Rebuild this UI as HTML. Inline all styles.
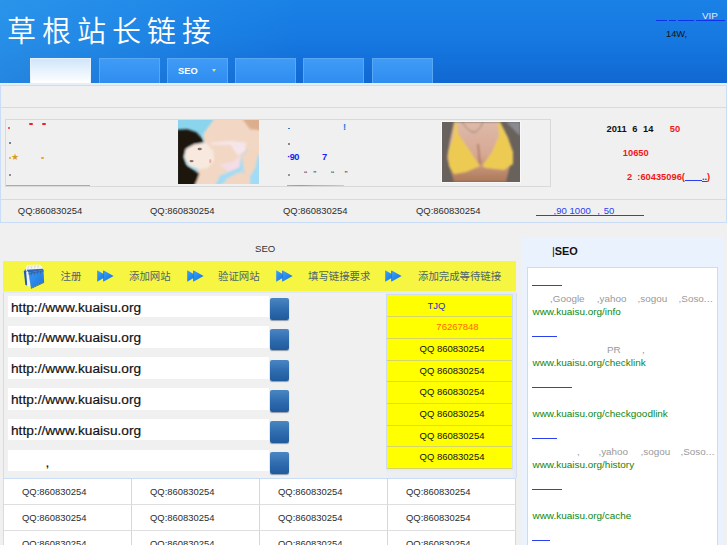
<!DOCTYPE html>
<html lang="zh-CN">
<head>
<meta charset="utf-8">
<title>草根站长链接</title>
<style>
html,body{margin:0;padding:0;}
body{width:727px;height:545px;overflow:hidden;position:relative;background:#f0f0f0;
 font-family:"Liberation Sans","Noto Sans CJK SC",sans-serif;font-size:9.3px;color:#222;}
.abs{position:absolute;}
a{color:#1a3cf0;text-decoration:underline;}
#hdr{left:0;top:0;width:727px;height:83px;
 background:linear-gradient(180deg,#1a81e6 0%,#1679e1 45%,#136ed8 80%,#1168d2 100%);}
#hdrglow{left:0;top:0;width:300px;height:83px;background:linear-gradient(90deg,rgba(60,170,240,.45),rgba(60,170,240,0));}
#logo{left:7px;top:12.4px;font-family:"Liberation Sans","Noto Sans CJK SC",sans-serif;font-weight:350;font-size:29px;letter-spacing:6px;color:#fff;line-height:40px;white-space:nowrap;}
.tab{top:57.5px;width:61px;height:25.5px;background:linear-gradient(180deg,#3f9bf6,#2f8df0);border:1px solid #58a8f6;border-bottom:none;box-sizing:border-box;}
.tab.on{background:linear-gradient(180deg,#cfe6fb 0%,#e8f3fd 50%,#ffffff 100%);border-color:#e6f1fc;}
.t{white-space:nowrap;line-height:12px;}
#strip{left:0px;top:85px;width:725px;height:21px;border:1px solid #c9dcf8;background:#f0f0f0;}
#adwrap{left:0px;top:108px;width:725px;height:114px;border:1px solid #c9dcf8;border-top:none;background:#f0f0f0;}
.adbox{top:119px;height:66px;border:1px solid #d9d9d9;background:#f0f0f0;}
.qq{font-size:9.45px;color:#2c2c2c;}
#ybar{left:3px;top:261px;width:513px;height:30px;background:#f5f542;}
.ytx{top:271px;font-size:10.4px;color:#4d666c;font-family:"Liberation Sans","Noto Sans CJK SC",sans-serif;line-height:12px;white-space:nowrap;}
.inp{left:8px;width:261px;height:21.7px;background:#fff;}
.url{left:11px;font-size:13.7px;color:#111;line-height:23px;-webkit-text-stroke:0.2px #111;white-space:nowrap;}
.btn{left:270.3px;width:18.4px;height:21.5px;border-radius:2px;box-shadow:0 1px 1px rgba(20,50,90,.45);background:linear-gradient(180deg,#4a86c2 0%,#2f6db0 50%,#1f5a9c 100%);}
.yrow{left:387px;width:125px;height:21px;background:#ffff00;border-bottom:1px solid #d6d466;text-align:center;line-height:19.4px;font-size:9.5px;color:#111;box-sizing:border-box;}
.cell{height:26px;background:#fff;border-right:1px solid #d8d8d8;border-bottom:1px solid #dedede;box-sizing:border-box;}
.sb-u{height:1px;background:#2a40f0;left:532px;}
.sb-g{left:532.5px;font-size:9.95px;color:#0e860e;white-space:nowrap;line-height:12px;}
.sb-d{font-size:9.9px;color:#999;white-space:nowrap;line-height:12px;}
</style>
</head>
<body>
<!-- header -->
<div id="hdr" class="abs"></div>
<div id="hdrglow" class="abs"></div>
<div id="logo" class="abs">草根站长链接</div>
<div class="abs tab on" style="left:30px"></div>
<div class="abs tab" style="left:99px"></div>
<div class="abs tab" style="left:167.2px"></div>
<div class="abs tab" style="left:235.3px"></div>
<div class="abs tab" style="left:303.3px"></div>
<div class="abs tab" style="left:371.8px"></div>
<div class="abs t" style="left:178px;top:65px;font-size:9.3px;font-weight:bold;color:#fff;">SEO</div>
<div class="abs" style="left:212px;top:69px;width:0;height:0;border-left:2.6px solid transparent;border-right:2.6px solid transparent;border-top:3.2px solid #e8e07a;"></div>
<div class="abs t" style="left:702px;top:10px;font-size:9.9px;color:#dfeeff;">VIP</div>
<div class="abs" style="left:656px;top:20px;width:11px;height:1px;background:#1030f0"></div>
<div class="abs" style="left:669px;top:20px;width:7px;height:1px;background:#1030f0"></div>
<div class="abs" style="left:678px;top:20px;width:16px;height:1px;background:#1030f0"></div>
<div class="abs" style="left:696px;top:20px;width:29px;height:1px;background:#1030f0"></div>
<div class="abs t" style="left:666px;top:27.5px;font-size:9.3px;color:#111;">14W,</div>

<!-- strip + ad wrapper -->
<div class="abs" style="left:0;top:83px;width:727px;height:2px;background:#e6eefa"></div>
<div id="strip" class="abs"></div>
<div id="adwrap" class="abs"></div>
<div class="abs" style="left:0px;top:199px;width:727px;height:1px;background:#c9dcf8"></div>

<div class="abs adbox" style="left:5px;width:544px;"></div>


<!-- ad box 1 content -->
<div class="abs" style="left:8px;top:127px;width:2px;height:2px;background:#f03020;border-radius:1px"></div>
<div class="abs" style="left:29px;top:123px;width:4px;height:2px;background:#f02020;border-radius:1px"></div>
<div class="abs" style="left:42px;top:123px;width:4px;height:2px;background:#f02020;border-radius:1px"></div>
<div class="abs" style="left:9px;top:142px;width:2px;height:2px;background:#505a80;border-radius:1px"></div>
<div class="abs" style="left:9px;top:157px;width:2px;height:2px;background:#d8a030;border-radius:1px"></div>
<div class="abs t" style="left:11px;top:151px;font-size:9px;color:#d89a20;font-family:'DejaVu Sans','Liberation Sans',sans-serif;">★</div>
<div class="abs" style="left:41px;top:157px;width:3px;height:2px;background:#e0a838;border-radius:1px"></div>
<div class="abs" style="left:9px;top:174px;width:2px;height:2px;background:#606a88;border-radius:1px"></div>
<div class="abs" style="left:6px;top:185px;width:84px;height:1px;background:#aaa"></div>

<!-- image 1 -->
<svg class="abs" style="left:178px;top:120px" width="81" height="64" viewBox="0 0 81 64">
 <defs><filter id="b1" x="-10%" y="-10%" width="120%" height="120%"><feGaussianBlur stdDeviation="7"/></filter>
 <filter id="b1s" x="-10%" y="-10%" width="120%" height="120%"><feGaussianBlur stdDeviation="4"/></filter>
 <clipPath id="c1"><rect width="81" height="64"/></clipPath></defs>
 <g clip-path="url(#c1)">
 <rect width="81" height="64" fill="#8ad4ee"/>
 <g transform="scale(0.1357) translate(-30,-32)">
 <g filter="url(#b1)">
  <path d="M300 520 L420 380 L640 230 L640 520 Z" fill="#a6dcf6"/>
  <path d="M215 135 L300 20 L640 20 L640 300 L600 420 L560 520 L150 520 L170 420 L230 240 Z" fill="#f2d8c4"/>
  <path d="M500 20 L640 20 L640 110 L560 100 Z" fill="#dcae8e"/>
  <path d="M560 250 L640 300 L640 520 L560 520 L560 440 L500 420 Z" fill="#a2dbf5"/>
  <path d="M500 290 L545 245 L560 300 L520 380 L470 440 L400 470 L330 520 L300 520 L340 440 L420 410 L480 380 Z" fill="#a2dbf5"/>
  <path d="M500 300 L560 240 L628 250 L600 380 L560 450 L520 430 Z" fill="#f2d6c0"/>
  <path d="M380 470 L470 420 L560 450 L560 520 L420 520 Z" fill="#f2d6c2"/>
  <path d="M20 104 L100 100 L165 122 L208 168 L220 198 L150 212 L95 238 L72 300 L90 362 L150 404 L188 424 L172 470 L150 520 L20 520 Z" fill="#1b1411"/>
  <path d="M85 250 L150 210 L235 200 L290 260 L295 330 L250 385 L180 395 L110 370 L78 310 Z" fill="#f8e9df"/>
  <path d="M270 200 L420 186 L530 200 L522 262 L470 292 L440 250 L420 215 L280 215 Z" fill="#f6e6ec"/>
  <path d="M330 362 L440 340 L492 288 L482 382 L400 412 L368 384 Z" fill="#f4dde6"/>
 </g>
 <g filter="url(#b1s)">
  <ellipse cx="190" cy="245" rx="16" ry="9" fill="#6a5248" opacity=".8"/>
  <ellipse cx="130" cy="335" rx="15" ry="9" fill="#6a5248" opacity=".8"/>
  <ellipse cx="268" cy="335" rx="8" ry="16" fill="#e8a098" opacity=".8"/>
 </g>
 </g></g>
</svg>

<!-- ad box 2 text -->
<div class="abs" style="left:288px;top:128px;width:2px;height:1px;background:#3a78d0"></div>
<div class="abs t" style="left:343px;top:121px;font-size:9.3px;font-weight:bold;color:#1e78e0;">!</div>
<div class="abs" style="left:288px;top:143px;width:1.6px;height:1.6px;background:#666;border-radius:1px"></div>
<div class="abs t" style="left:287.3px;top:151px;font-size:9.2px;font-weight:bold;color:#1a22f0;letter-spacing:-.6px">·90</div>
<div class="abs t" style="left:322px;top:151px;font-size:9.3px;font-weight:bold;color:#1a22f0;">7</div>
<div class="abs" style="left:288px;top:174px;width:1.6px;height:1.6px;background:#777;border-radius:1px"></div>
<div class="abs t" style="left:304px;top:167.5px;font-size:9.3px;color:#555;">“</div>
<div class="abs t" style="left:313.3px;top:167.5px;font-size:9.3px;color:#555;">”</div>
<div class="abs t" style="left:331px;top:167.5px;font-size:9.3px;color:#555;">“</div>
<div class="abs t" style="left:344.5px;top:167.5px;font-size:9.3px;color:#555;">”</div>
<div class="abs" style="left:287px;top:185px;width:57px;height:1px;opacity:.75;background:linear-gradient(90deg,#d08850,#8a7a80 25%,#d09060 50%,#c8a088 75%,#c0c0c0)"></div>

<!-- image 2 -->
<div class="abs" style="left:441px;top:121px;width:80px;height:62px;background:#f8f8f8"></div>
<svg class="abs" style="left:442px;top:122px" width="78" height="60" viewBox="0 0 78 60">
 <defs><filter id="b2" x="-10%" y="-10%" width="120%" height="120%"><feGaussianBlur stdDeviation="1.1"/></filter>
 <clipPath id="c2"><rect width="78" height="60"/></clipPath>
 <linearGradient id="sk" x1="0" y1="0" x2="0" y2="1"><stop offset="0" stop-color="#dfbaa8"/><stop offset=".55" stop-color="#d6a893"/><stop offset="1" stop-color="#ac7858"/></linearGradient></defs>
 <g clip-path="url(#c2)">
 <rect width="78" height="60" fill="#68615c"/>
 <g filter="url(#b2)">
  <path d="M64 0 L78 0 L78 14 Z" fill="#8a8a90"/>
  <path d="M12 0 L58 0 L66 16 L70 34 L64 60 L12 60 L5 36 L8 18 Z" fill="url(#sk)"/>
  <path d="M13 0 L15 0 L16 12 L26 26 L38 44 L24 50 L12 52 L7 44 L6 30 L11 16 Z" fill="#edcb52"/>
  <path d="M56 0 L58 0 L66 16 L71 30 L71 42 L62 48 L44 46 L40 44 L50 30 L57 14 Z" fill="#edcb52"/>
  <path d="M20 0 Q28 12 34 10 Q39 6 41 0" fill="none" stroke="#8a7f7a" stroke-width="1"/>
  <path d="M36 22 L38 42" stroke="#a8705a" stroke-width="1.5" fill="none"/>
 </g></g>
</svg>

<!-- right info -->
<div class="abs t" style="left:606.5px;top:122.6px;font-size:9.3px;font-weight:bold;color:#111;word-spacing:3px;">2011 6 14</div>
<div class="abs t" style="left:669.8px;top:122.6px;font-size:9.3px;font-weight:bold;color:#f01818;">50</div>
<div class="abs t" style="left:622.8px;top:146.6px;font-size:9.3px;font-weight:bold;color:#f01818;">10650</div>
<div class="abs t" style="left:627px;top:171px;font-size:9.3px;font-weight:bold;color:#f01818;">2&nbsp; :60435096(<span style="display:inline-block;width:17px;border-bottom:1px solid #2a40f0;height:9px;vertical-align:top"></span><span style="color:#2a40f0;text-decoration:underline">..</span>)</div>
<div class="abs t" style="left:536px;top:205px;font-size:9.3px;color:#2a40f0;width:108px;border-bottom:1px solid #2a40f0;height:11px;line-height:12px;box-sizing:border-box;"><span style="margin-left:17.6px;font-size:9.55px">,90 1000<span style="display:inline-block;width:6.6px"></span>,<span style="display:inline-block;width:3.8px"></span>50</span></div>

<!-- QQ row -->
<div class="abs t qq" style="left:17.8px;top:205px;">QQ:860830254</div>
<div class="abs t qq" style="left:150px;top:205px;">QQ:860830254</div>
<div class="abs t qq" style="left:283px;top:205px;">QQ:860830254</div>
<div class="abs t qq" style="left:416px;top:205px;">QQ:860830254</div>


<!-- main left panel -->
<div class="abs" style="left:3px;top:291px;width:513px;height:187px;background:#f0f0f0;border-left:1px solid #c9dcf8;box-sizing:border-box;"></div>
<div class="abs t" style="left:255px;top:243px;font-size:9.6px;color:#333;">SEO</div>
<div id="ybar" class="abs"></div>
<div class="abs" style="left:3px;top:291px;width:513px;height:1.5px;background:#e2eaf8"></div>
<!-- notebook icon -->
<svg class="abs" style="left:23px;top:264px" width="22" height="25" viewBox="0 0 22 25">
 <defs><linearGradient id="nb" x1="0" y1="0" x2="1" y2="1"><stop offset="0" stop-color="#3a98f4"/><stop offset="1" stop-color="#1b74de"/></linearGradient></defs>
 <g transform="scale(0.06878) translate(-116,-87)">
  <path d="M128 195 L160 148 L182 160 L180 402 L150 388 Z" fill="#1f5cb0"/>
  <path d="M162 200 L205 188 L222 425 L178 402 Z" fill="#f1f1f6"/>
  <path d="M150 152 L178 102 L362 94 L402 136 L402 158 L180 170 L160 200 Z" fill="#f3f3f3"/>
  <path d="M172 172 L402 156 L414 176 L198 216 Z" fill="#2c66b8"/>
  <path d="M196 214 L414 174 L423 350 L232 438 Z" fill="url(#nb)"/>
  <path d="M196 214 L414 174 L415 196 L198 238 Z" fill="#2a70c8"/>
  <path d="M240 215 l-6 34 M285 206 l-6 34 M330 198 l-6 34 M375 190 l-6 34" stroke="#4a5a70" stroke-width="11" stroke-linecap="round"/>
  <path d="M205 112 l-20 44 M250 108 l-18 46 M295 104 l-14 48 M340 100 l-8 50" stroke="#c9c9cf" stroke-width="10"/>
  <path d="M232 438 L423 350 L423 360 L236 446 Z" fill="#35506e"/>
 </g>
</svg>

<div class="abs ytx" style="left:60.5px;">注册</div>
<svg class="abs" style="left:97px;top:270px" width="17" height="12" viewBox="0 0 17 12"><defs><linearGradient id="ag" x1="0" y1="0" x2="1" y2="1"><stop offset="0" stop-color="#3ea2fa"/><stop offset="1" stop-color="#0e6ee0"/></linearGradient></defs><path d="M0.2 0.2 L10 6 L0.2 11.8 Z" fill="url(#ag)"/><path d="M6.3 0.2 L16.6 6 L6.3 11.8 Z" fill="url(#ag)"/><path d="M6.5 1 L6.5 11" stroke="#1862c8" stroke-width=".7" opacity=".7"/></svg>
<div class="abs ytx" style="left:129px;">添加网站</div>
<svg class="abs" style="left:187px;top:270px" width="17" height="12" viewBox="0 0 17 12"><path d="M0.2 0.2 L10 6 L0.2 11.8 Z" fill="url(#ag)"/><path d="M6.3 0.2 L16.6 6 L6.3 11.8 Z" fill="url(#ag)"/><path d="M6.5 1 L6.5 11" stroke="#1862c8" stroke-width=".7" opacity=".7"/></svg>
<div class="abs ytx" style="left:218px;">验证网站</div>
<svg class="abs" style="left:276px;top:270px" width="17" height="12" viewBox="0 0 17 12"><path d="M0.2 0.2 L10 6 L0.2 11.8 Z" fill="url(#ag)"/><path d="M6.3 0.2 L16.6 6 L6.3 11.8 Z" fill="url(#ag)"/><path d="M6.5 1 L6.5 11" stroke="#1862c8" stroke-width=".7" opacity=".7"/></svg>
<div class="abs ytx" style="left:308px;">填写链接要求</div>
<svg class="abs" style="left:385px;top:270px" width="17" height="12" viewBox="0 0 17 12"><path d="M0.2 0.2 L10 6 L0.2 11.8 Z" fill="url(#ag)"/><path d="M6.3 0.2 L16.6 6 L6.3 11.8 Z" fill="url(#ag)"/><path d="M6.5 1 L6.5 11" stroke="#1862c8" stroke-width=".7" opacity=".7"/></svg>
<div class="abs ytx" style="left:418px;">添加完成等待链接</div>
<div class="abs inp" style="top:295.5px"></div>
<div class="abs url" style="top:295.5px">http://www.kuaisu.org</div>
<div class="abs btn" style="top:298.0px"></div>
<div class="abs inp" style="top:326.3px"></div>
<div class="abs url" style="top:326.3px">http://www.kuaisu.org</div>
<div class="abs btn" style="top:328.8px"></div>
<div class="abs inp" style="top:357.1px"></div>
<div class="abs url" style="top:357.1px">http://www.kuaisu.org</div>
<div class="abs btn" style="top:359.6px"></div>
<div class="abs inp" style="top:387.9px"></div>
<div class="abs url" style="top:387.9px">http://www.kuaisu.org</div>
<div class="abs btn" style="top:390.4px"></div>
<div class="abs inp" style="top:418.7px"></div>
<div class="abs url" style="top:418.7px">http://www.kuaisu.org</div>
<div class="abs btn" style="top:421.2px"></div>
<div class="abs inp" style="top:449.5px"></div>
<div class="abs url" style="top:449.0px;left:45.5px;margin-top:1.5px">,</div>
<div class="abs btn" style="top:452.0px"></div>
<div class="abs" style="left:385.5px;top:293px;width:131px;height:185px;background:#e6ebf3;border-right:1px solid #d5e0f4;box-sizing:border-box"></div>
<div class="abs" style="left:385.5px;top:471px;width:127.5px;height:7px;background:#eceef2"></div>
<div class="abs" style="left:386px;top:294px;width:127px;height:175px;background:#dfe8d0;border:1px solid #cfdcf0;box-sizing:border-box"></div>
<div class="abs yrow" style="top:295.5px;height:21.7px"><span style="color:#2a2ed0;margin-right:26px">TJQ</span></div>
<div class="abs yrow" style="top:317.2px;height:21.7px"><span style="color:#ff6a00;margin-left:16px">76267848</span></div>
<div class="abs yrow" style="top:338.9px;height:21.7px"><span style="margin-left:5px">QQ 860830254</span></div>
<div class="abs yrow" style="top:360.6px;height:21.7px"><span style="margin-left:5px">QQ 860830254</span></div>
<div class="abs yrow" style="top:382.3px;height:21.7px"><span style="margin-left:5px">QQ 860830254</span></div>
<div class="abs yrow" style="top:404.0px;height:21.7px"><span style="margin-left:5px">QQ 860830254</span></div>
<div class="abs yrow" style="top:425.7px;height:21.7px"><span style="margin-left:5px">QQ 860830254</span></div>
<div class="abs yrow" style="top:447.4px;height:21.7px"><span style="margin-left:5px">QQ 860830254</span></div>
<div class="abs" style="left:3px;top:478px;width:513px;height:67px;background:#fff;border-top:1px solid #c9dcf8;border-left:1px solid #c9dcf8;box-sizing:border-box"></div>
<div class="abs cell" style="left:4px;top:479.0px;width:128px;height:26.2px"></div>
<div class="abs t qq" style="left:22px;top:486.0px">QQ:860830254</div>
<div class="abs cell" style="left:132px;top:479.0px;width:128px;height:26.2px"></div>
<div class="abs t qq" style="left:150px;top:486.0px">QQ:860830254</div>
<div class="abs cell" style="left:260px;top:479.0px;width:128px;height:26.2px"></div>
<div class="abs t qq" style="left:278px;top:486.0px">QQ:860830254</div>
<div class="abs cell" style="left:388px;top:479.0px;width:127.5px;height:26.2px"></div>
<div class="abs t qq" style="left:406px;top:486.0px">QQ:860830254</div>
<div class="abs cell" style="left:4px;top:505.2px;width:128px;height:26.2px"></div>
<div class="abs t qq" style="left:22px;top:512.2px">QQ:860830254</div>
<div class="abs cell" style="left:132px;top:505.2px;width:128px;height:26.2px"></div>
<div class="abs t qq" style="left:150px;top:512.2px">QQ:860830254</div>
<div class="abs cell" style="left:260px;top:505.2px;width:128px;height:26.2px"></div>
<div class="abs t qq" style="left:278px;top:512.2px">QQ:860830254</div>
<div class="abs cell" style="left:388px;top:505.2px;width:127.5px;height:26.2px"></div>
<div class="abs t qq" style="left:406px;top:512.2px">QQ:860830254</div>
<div class="abs cell" style="left:4px;top:531.4px;width:128px;height:26.2px"></div>
<div class="abs t qq" style="left:22px;top:538.4px">QQ:860830254</div>
<div class="abs cell" style="left:132px;top:531.4px;width:128px;height:26.2px"></div>
<div class="abs t qq" style="left:150px;top:538.4px">QQ:860830254</div>
<div class="abs cell" style="left:260px;top:531.4px;width:128px;height:26.2px"></div>
<div class="abs t qq" style="left:278px;top:538.4px">QQ:860830254</div>
<div class="abs cell" style="left:388px;top:531.4px;width:127.5px;height:26.2px"></div>
<div class="abs t qq" style="left:406px;top:538.4px">QQ:860830254</div>

<!-- sidebar -->
<div class="abs" style="left:522px;top:238px;width:202px;height:307px;background:#eaf2fd"></div>
<div class="abs t" style="left:552px;top:245px;font-size:10.9px;font-weight:bold;color:#111;"><span style="font-weight:normal">|</span>SEO</div>
<div class="abs" style="left:527px;top:267px;width:191px;height:278px;background:#fff;border:1px solid #c9dcf8;border-bottom:none;box-sizing:border-box"></div>

<div class="abs sb-u" style="top:285px;width:30px"></div>
<div class="abs sb-d" style="left:550px;top:293px;">,Google</div><div class="abs sb-d" style="left:596.8px;top:293px;">,yahoo</div><div class="abs sb-d" style="left:637.5px;top:293px;">,sogou</div><div class="abs sb-d" style="left:678.6px;top:293px;">,Soso<span style="letter-spacing:.3px">...</span></div>
<div class="abs sb-g" style="top:306px;">www.kuaisu.org/info</div>
<div class="abs sb-u" style="top:336px;width:25px"></div>
<div class="abs sb-d" style="left:607px;top:344px;">PR</div><div class="abs sb-d" style="left:642px;top:344px;">,</div>
<div class="abs sb-g" style="top:357px;">www.kuaisu.org/checklink</div>
<div class="abs sb-u" style="top:387px;width:40px"></div>
<div class="abs sb-g" style="top:408px;">www.kuaisu.org/checkgoodlink</div>
<div class="abs sb-u" style="top:438px;width:25px"></div>
<div class="abs sb-d" style="left:577px;top:446px;">,</div><div class="abs sb-d" style="left:598.4px;top:446px;">,yahoo</div><div class="abs sb-d" style="left:640.5px;top:446px;">,sogou</div><div class="abs sb-d" style="left:680.5px;top:446px;">,Soso<span style="letter-spacing:.3px">...</span></div>
<div class="abs sb-g" style="top:459px;">www.kuaisu.org/history</div>
<div class="abs sb-u" style="top:489px;width:30px"></div>
<div class="abs sb-g" style="top:510px;">www.kuaisu.org/cache</div>
<div class="abs sb-u" style="top:540px;width:18px"></div>
</body>
</html>
